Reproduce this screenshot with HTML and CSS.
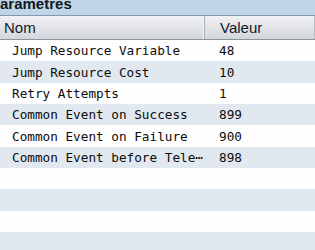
FILE: index.html
```html
<!DOCTYPE html>
<html lang="fr">
<head>
    <meta charset="UTF-8">
    <title>Parametres</title>
    <link rel="stylesheet" href="styles.css">
</head>
<body>
    <div class="panel">
        <div class="titlebar"><span class="title">Parametres</span></div>

        <div class="grid-head">
            <div class="col-name">Nom</div>
            <div class="col-value">Valeur</div>
        </div>

        <div class="rows">
            <div class="row"><div class="cell-name">Jump Resource Variable</div><div class="cell-value">48</div></div>
            <div class="row"><div class="cell-name">Jump Resource Cost</div><div class="cell-value">10</div></div>
            <div class="row"><div class="cell-name">Retry Attempts</div><div class="cell-value">1</div></div>
            <div class="row"><div class="cell-name">Common Event on Success</div><div class="cell-value">899</div></div>
            <div class="row"><div class="cell-name">Common Event on Failure</div><div class="cell-value">900</div></div>
            <div class="row"><div class="cell-name">Common Event before Tele⋯</div><div class="cell-value">898</div></div>
            <div class="row"><div class="cell-name"></div><div class="cell-value"></div></div>
            <div class="row"><div class="cell-name"></div><div class="cell-value"></div></div>
            <div class="row"><div class="cell-name"></div><div class="cell-value"></div></div>
            <div class="row"><div class="cell-name"></div><div class="cell-value"></div></div>
        </div>
    </div>
</body>
</html>
```

FILE: styles.css
```css
* {
    margin: 0;
    padding: 0;
    box-sizing: border-box;
}

body {
    width: 315px;
    height: 250px;
    overflow: hidden;
    background: #fefefe;
    font-family: 'Liberation Sans', Arial, sans-serif;
}

.panel {
    width: 315px;
}

/* barre de titre, rognée à gauche comme dans la fenêtre */
.titlebar {
    height: 16px;
    background: #c1d5e9;
    border-bottom: 1px solid #8397ad;
    overflow: hidden;
    white-space: nowrap;
}

.title {
    display: block;
    margin-left: -10px;
    margin-top: -5px;
    font-size: 15px;
    font-weight: bold;
    line-height: 18px;
    color: #101820;
}

.grid-head {
    display: grid;
    grid-template-columns: 205px 1fr;
    height: 24px;
    background: linear-gradient(#f1f2f4, #dfe1e5 60%, #d3d6db);
    border-bottom: 1px solid #8e949c;
    font-size: 15px;
    line-height: 23px;
    color: #121a2a;
}

.col-name {
    padding-left: 4px;
    border-right: 1px solid #a9aeb5;
    box-shadow: inset -1px 0 0 #f6f7f8;
}

.col-value {
    padding-left: 15px;
    border-right: 1px solid #b9bdc3;
}

.row {
    display: grid;
    grid-template-columns: 205px 1fr;
    height: 21.35px;
    align-items: center;
    font-family: 'DejaVu Sans Mono', monospace;
    font-size: 12.7px;
    color: #0c0c0c;
    background: #fefefe;
}

.row:nth-child(even) {
    background: #e1e8f0;
}

.cell-name {
    padding-left: 12px;
    white-space: nowrap;
    overflow: hidden;
}

.cell-value {
    padding-left: 14px;
}
```
